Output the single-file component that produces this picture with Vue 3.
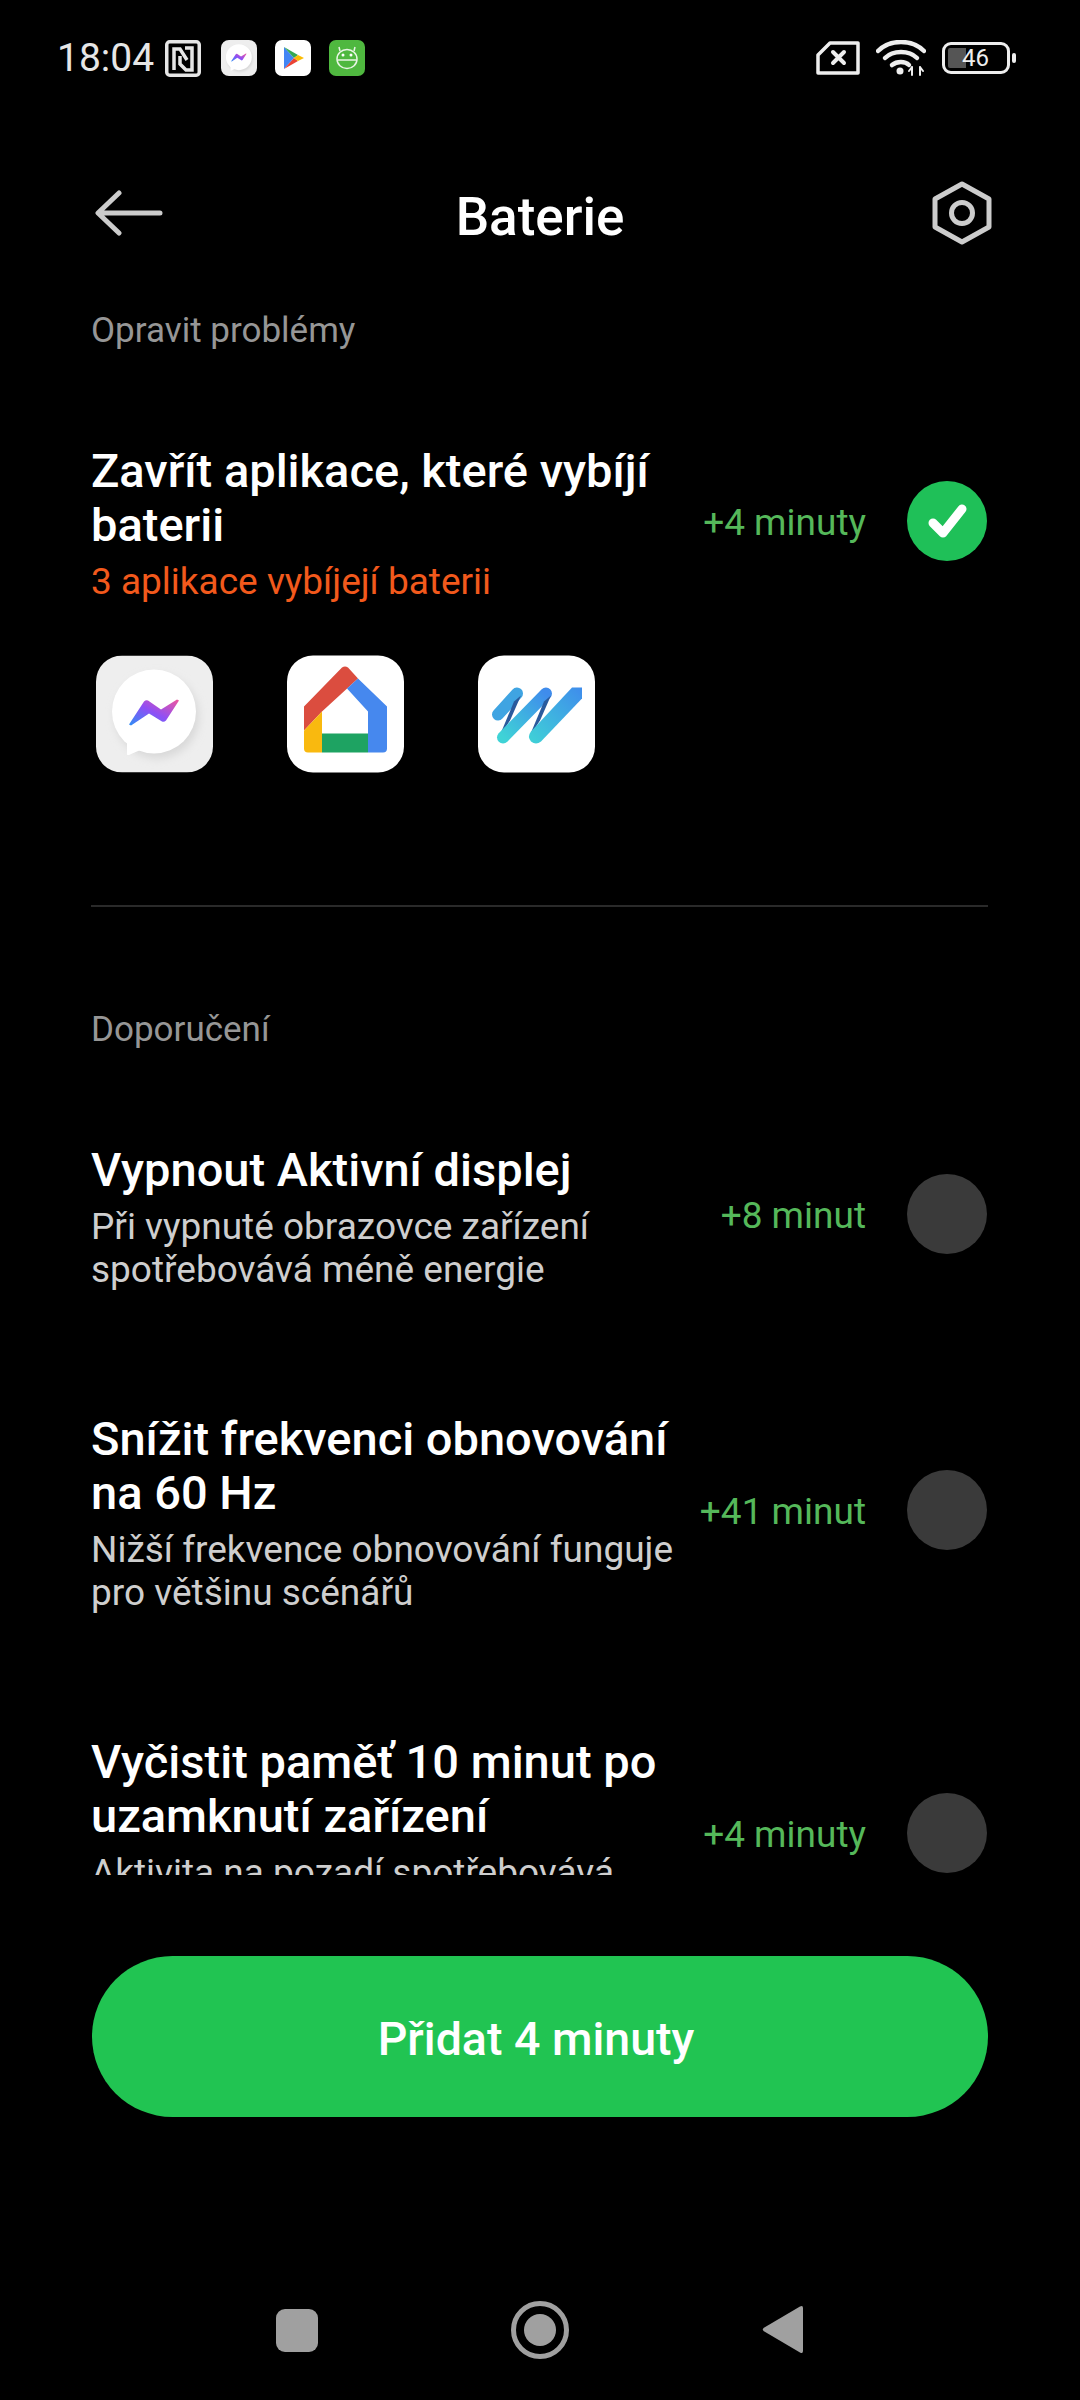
<template>
  <div class="phone">
    <svg class="sprite" width="0" height="0" aria-hidden="true">
      <defs>
        <linearGradient id="boltGrad" x1="0" y1="1" x2="1" y2="0">
          <stop offset="0" stop-color="#2f8ff5" />
          <stop offset="0.5" stop-color="#8f4ff5" />
          <stop offset="1" stop-color="#f0569c" />
        </linearGradient>
        <linearGradient id="waveGrad" x1="0" y1="1" x2="1" y2="0">
          <stop offset="0" stop-color="#3fd3d6" />
          <stop offset="1" stop-color="#3f8cec" />
        </linearGradient>
        <filter id="softShadow" x="-20%" y="-20%" width="140%" height="140%">
          <feGaussianBlur stdDeviation="4" />
        </filter>
        <symbol id="messenger" viewBox="0 0 117 117">
          <rect width="117" height="117" rx="26" fill="#eeeeee" />
          <circle cx="61" cy="61" r="42" fill="#d8d8d8" filter="url(#softShadow)" />
          <path d="M31 84 L31 99 Q32 100 34 99 L50 92 Z" fill="#fff" />
          <circle cx="58" cy="56" r="42" fill="#fff" />
          <path d="M33 69 L48 46 Q50 44 52 45 L65 54 L81 44 L83 45 L70 65 Q68 67 66 66 L53 58 L35 70 Z" fill="url(#boltGrad)" />
        </symbol>
      </defs>
    </svg>

    <div class="status">
      <span class="time">18:04</span>
      <svg class="st-icon nfc" viewBox="0 0 36 37" fill="none" stroke="#e6e6e6" stroke-width="3.500">
        <rect x="1.750" y="1.750" width="32.500" height="33.500" rx="3" />
        <path d="M9 30V9h6l7 11M15 16v8l6 6h6V8h-7" />
      </svg>
      <svg class="st-icon" viewBox="0 0 117 117"><use href="#messenger" /></svg>
      <svg class="st-icon" viewBox="0 0 36 36">
        <rect width="36" height="36" rx="7" fill="#fff" />
        <path d="M9 7 L19 18 L9 29 Z" fill="#4285f4" />
        <path d="M9 7 L23 15 L19 18 Z" fill="#34a853" />
        <path d="M9 29 L23 21 L19 18 Z" fill="#ea4335" />
        <path d="M23 15 L29 18 L23 21 L19 18 Z" fill="#fbbc04" />
      </svg>
      <svg class="st-icon" viewBox="0 0 36 36">
        <rect width="36" height="36" rx="7" fill="#4fb83f" />
        <g fill="none" stroke="#e8f5e4" stroke-width="1.500">
          <ellipse cx="18" cy="19" rx="10" ry="9.500" />
          <path d="M8.500 20h19M11 11l-1-4M25 11l1-4" />
        </g>
        <circle cx="14" cy="15" r="1.500" fill="#fff" />
        <circle cx="22" cy="15" r="1.500" fill="#fff" />
      </svg>

      <div class="st-right">
        <svg class="sim" viewBox="0 0 44 34" fill="none" stroke="#eee" stroke-width="3.500" stroke-linejoin="round">
          <path d="M14 2H42V32H2V14Z" />
          <path d="M17 11l11 11M28 11L17 22" stroke-width="4" stroke-linecap="round" />
        </svg>
        <svg class="wifi" viewBox="0 0 50 36" fill="none" stroke="#eee" stroke-linecap="round">
          <path d="M2 11C14 -1 36 -1 48 11" stroke-width="4.500" />
          <path d="M9 18C17 10 33 10 41 18" stroke-width="4.500" />
          <path d="M16 25C21 21 29 21 33 25" stroke-width="4.500" />
          <circle cx="24" cy="31" r="3.500" fill="#eee" stroke="none" />
          <path d="M36 27v8M36 27l-3 4M44 35v-8M44 27l3 4" stroke-width="2" />
        </svg>
        <div class="battery">
          <div class="batt-body">
            <div class="batt-fill" :style="{ width: level * 0.4 + 'px' }"></div>
            <span class="batt-num">{{ level }}</span>
          </div>
          <div class="batt-nub"></div>
        </div>
      </div>
    </div>

    <div class="header">
      <svg class="back" viewBox="0 0 68 46" fill="none" stroke="#ccc" stroke-width="5" stroke-linecap="round" stroke-linejoin="round">
        <path d="M65 23H4M24 3L3 23L24 43" />
      </svg>
      <h1>Baterie</h1>
      <svg class="gear" viewBox="0 0 60 64" fill="none" stroke="#ccc" stroke-width="5" stroke-linejoin="round">
        <path d="M30 3L57 18V46L30 61L3 46V18Z" />
        <circle cx="30" cy="32" r="10.500" />
      </svg>
    </div>

    <div class="scroll">
      <p class="section first">Opravit problémy</p>

      <div class="row">
        <div class="info">
          <div class="title">Zavřít aplikace, které vybíjí baterii</div>
          <div class="warn">3 aplikace vybíjejí baterii</div>
        </div>
        <span class="gain">+4 minuty</span>
        <span class="check on">
          <svg viewBox="0 0 80 80" fill="none" stroke="#fff" stroke-width="9" stroke-linecap="round" stroke-linejoin="round">
            <path d="M26 42L36 52L55 28" />
          </svg>
        </span>
      </div>

      <div class="apps">
        <svg class="app" viewBox="0 0 117 117"><use href="#messenger" /></svg>
        <svg class="app" viewBox="0 0 117 117">
          <rect width="117" height="117" rx="26" fill="#fff" />
          <path d="M17 75V51L55 12Q58 10 61 12L71 23L35 56Z" fill="#db4d3f" />
          <path d="M17 75L35 56V97H21Q17 97 17 93Z" fill="#f9b90f" />
          <path d="M35 78H81V97H35Z" fill="#1ea362" />
          <path d="M71 23L100 51V93Q100 97 96 97H81V56L60 33Z" fill="#4688ee" />
        </svg>
        <svg class="app" viewBox="0 0 117 117" fill="none" stroke-linecap="round">
          <rect width="117" height="117" rx="26" fill="#fff" />
          <path d="M20 59L39 38" stroke="#3fa4e2" stroke-width="12" />
          <path d="M21 82L36 46L43 40L32 65Z" fill="#2a5a9c" />
          <path d="M25 82L68 38" stroke="url(#waveGrad)" stroke-width="12" />
          <path d="M51 82L66 46L73 40L62 65Z" fill="#2a5a9c" />
          <path d="M94 32H104V43L63 86Q58 90 53 86Q49 81 53 76Z" fill="url(#waveGrad)" />
        </svg>
      </div>

      <div class="divider"></div>

      <p class="section">Doporučení</p>

      <div class="list">
        <div v-for="item in tips" :key="item.title" class="row">
          <div class="info">
            <div class="title">{{ item.title }}</div>
            <div class="desc">{{ item.desc }}</div>
          </div>
          <span class="gain">{{ item.gain }}</span>
          <span class="check"></span>
        </div>
      </div>
    </div>

    <div class="action">
      <button>Přidat 4 minuty</button>
    </div>

    <div class="nav">
      <span class="nav-square"></span>
      <svg class="nav-home" viewBox="0 0 58 58">
        <circle cx="29" cy="29" r="26.500" fill="none" stroke="#a0a0a0" stroke-width="5" />
        <circle cx="29" cy="29" r="16" fill="#a0a0a0" />
      </svg>
      <svg class="nav-back" viewBox="0 0 41 49">
        <path d="M38 1.500Q41 0 41 3V46Q41 49 38 47.500L1.500 26Q0 24.500 1.500 23Z" fill="#a0a0a0" />
      </svg>
    </div>
  </div>
</template>

<script setup>
const level = 46

const tips = [
  {
    title: 'Vypnout Aktivní displej',
    desc: 'Při vypnuté obrazovce zařízení spotřebovává méně energie',
    gain: '+8 minut',
  },
  {
    title: 'Snížit frekvenci obnovování na 60 Hz',
    desc: 'Nižší frekvence obnovování funguje pro většinu scénářů',
    gain: '+41 minut',
  },
  {
    title: 'Vyčistit paměť 10 minut po uzamknutí zařízení',
    desc: 'Aktivita na pozadí spotřebovává energii baterie',
    gain: '+4 minuty',
  },
]
</script>

<style>
body {
  background: #000;
}
</style>

<style scoped>
.phone {
  width: 1080px;
  height: 2400px;
  background: #000;
  color: #fff;
  font-family: Roboto, "Noto Sans", sans-serif;
  display: flex;
  flex-direction: column;
  overflow: hidden;
}
.sprite {
  position: absolute;
}
.status {
  height: 116px;
  padding: 0 64px 0 57px;
  display: flex;
  align-items: center;
  box-sizing: border-box;
  flex-shrink: 0;
}
.time {
  font-size: 39px;
  color: #e6e6e6;
  margin-right: 11px;
}
.st-icon {
  width: 36px;
  height: 36px;
  margin-right: 18px;
}
.nfc {
  height: 37px;
  margin-right: 20px;
}
.st-right {
  margin-left: auto;
  display: flex;
  align-items: center;
}
.sim {
  width: 44px;
  height: 34px;
  margin-right: 16px;
}
.wifi {
  width: 50px;
  height: 36px;
  margin-right: 16px;
}
.battery {
  display: flex;
  align-items: center;
  gap: 2px;
}
.batt-body {
  width: 68px;
  height: 32px;
  border: 3px solid #eee;
  border-radius: 9px;
  box-sizing: border-box;
  position: relative;
  padding: 3px;
  display: flex;
}
.batt-fill {
  background: #555;
  height: 100%;
  border-radius: 2px 0 0 2px;
}
.batt-num {
  position: absolute;
  left: 17px;
  top: -1px;
  font-size: 24px;
  line-height: 28px;
  color: #eee;
}
.batt-nub {
  width: 4px;
  height: 10px;
  background: #eee;
  border-radius: 2px;
}
.header {
  height: 130px;
  padding: 0 88px 0 95px;
  margin-top: 32px;
  display: flex;
  align-items: center;
  justify-content: space-between;
  position: relative;
  box-sizing: border-box;
  flex-shrink: 0;
}
.back {
  width: 68px;
  height: 46px;
}
.gear {
  width: 60px;
  height: 64px;
}
h1 {
  margin: 8px 0 0;
  font-size: 53px;
  font-weight: 500;
  line-height: 60px;
  position: absolute;
  left: 0;
  right: 0;
  text-align: center;
  pointer-events: none;
}
.scroll {
  flex: 1;
  min-height: 0;
  overflow: hidden;
  padding: 32px 92px 0 91px;
}
.section {
  margin: 0;
  font-size: 35px;
  line-height: 42px;
  color: #969696;
}
.row {
  display: flex;
  align-items: center;
  padding-right: 1px;
}
.first + .row {
  margin-top: 86px;
}
.info {
  flex: 1;
  min-width: 0;
  padding: 6px 16px 0 0;
}
.title {
  font-size: 47px;
  font-weight: 500;
  line-height: 54px;
}
.warn {
  font-size: 37px;
  line-height: 44px;
  margin-top: 8px;
  color: #f2591c;
}
.desc {
  font-size: 37px;
  line-height: 43px;
  margin-top: 8px;
  color: #cecece;
}
.gain {
  font-size: 37px;
  color: #55b85a;
  white-space: nowrap;
  margin-right: 41px;
  padding-top: 3px;
}
.check {
  width: 80px;
  height: 80px;
  border-radius: 50%;
  background: #3a3a3a;
  flex-shrink: 0;
}
.check.on {
  background: #1fc058;
}
.check svg {
  display: block;
}
.apps {
  display: flex;
  gap: 74px;
  margin-top: 51px;
  padding-left: 5px;
}
.app {
  width: 117px;
  height: 118px;
  flex-shrink: 0;
}
.divider {
  height: 2px;
  background: #2a2a2a;
  margin-top: 132px;
}
.divider + .section {
  margin-top: 102px;
}
.list {
  margin-top: 86px;
  display: flex;
  flex-direction: column;
  gap: 115px;
}
.action {
  padding: 81px 92px 0;
  flex-shrink: 0;
}
button {
  width: 100%;
  height: 161px;
  border: none;
  border-radius: 81px;
  background: #21c452;
  color: #fff;
  font-family: inherit;
  font-size: 46.500px;
  font-weight: 500;
  padding: 4px 8px 0 0;
}
.nav {
  height: 283px;
  padding: 0 277px 40px 276px;
  display: flex;
  align-items: flex-end;
  justify-content: space-between;
  box-sizing: border-box;
  flex-shrink: 0;
}
.nav-square {
  width: 42px;
  height: 43px;
  border-radius: 9px;
  background: #a0a0a0;
  margin-bottom: 8px;
}
.nav-home {
  width: 58px;
  height: 58px;
  margin-bottom: 1px;
}
.nav-back {
  width: 41px;
  height: 49px;
  margin-bottom: 6px;
}
</style>
